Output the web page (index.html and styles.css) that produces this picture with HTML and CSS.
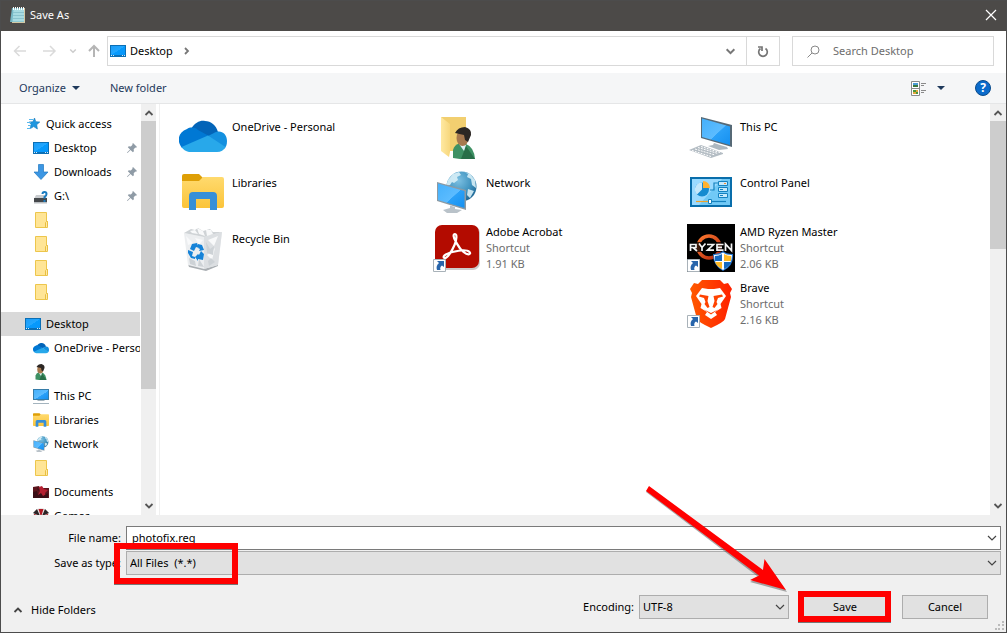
FILE: index.html
```html
<!DOCTYPE html>
<html lang="en">
<head>
<meta charset="utf-8">
<title>Save As</title>
<link rel="stylesheet" href="styles.css">
</head>
<body>
<svg class="defs" aria-hidden="true">
  <defs>
    <linearGradient id="gBlue" x1="0" y1="0" x2="1" y2="1"><stop offset="0" stop-color="#45b0fb"/><stop offset=".55" stop-color="#5cbcff"/><stop offset=".56" stop-color="#2ba1f8"/><stop offset="1" stop-color="#1590f0"/></linearGradient>
    <linearGradient id="gDesk" x1="0" y1="0" x2="1" y2="1"><stop offset="0" stop-color="#1c9cf6"/><stop offset=".5" stop-color="#22a7ff"/><stop offset=".51" stop-color="#069afc"/><stop offset="1" stop-color="#0896fa"/></linearGradient>
    <linearGradient id="gFold" x1="0" y1="0" x2="0" y2="1"><stop offset="0" stop-color="#ffda6e"/><stop offset="1" stop-color="#fbc43a"/></linearGradient>
    <linearGradient id="gPale" x1="0" y1="0" x2="1" y2="0"><stop offset="0" stop-color="#ffe9a2"/><stop offset="1" stop-color="#f7d77d"/></linearGradient>
    <radialGradient id="gGlobe" cx=".4" cy=".3" r=".75"><stop offset="0" stop-color="#7cc0e2"/><stop offset=".6" stop-color="#3f92be"/><stop offset="1" stop-color="#1d6390"/></radialGradient>
    <linearGradient id="gBrave" x1="0" y1="0" x2="1" y2="0"><stop offset="0" stop-color="#ff5a00"/><stop offset="1" stop-color="#ff2000"/></linearGradient>
    <linearGradient id="gRing" x1="0" y1="0" x2="1" y2="1"><stop offset="0" stop-color="#ff7a30"/><stop offset="1" stop-color="#b3260c"/></linearGradient>
  </defs>
  <symbol id="desktop" viewBox="0 0 16 16"><path fill="#0b6fb5" d="M0 2h16v12H0z"/><path fill="url(#gDesk)" d="M1 3h14v9H1z"/><path fill="#d6ebf9" d="M1 12h1v1H1zM3 12h1v1H3zM12 12h1v1h-1zM14 12h1v1h-1z"/></symbol>
  <symbol id="folder" viewBox="0 0 16 16"><path fill="#ffe596" stroke="#edc64c" d="M2.500.5h11v9h1v6h-12z"/><path fill="#ffe9a5" stroke="#e9bf41" d="M12.500 10.500l1-1h1v5l-1 1h-1z"/></symbol>
  <symbol id="pin" viewBox="0 0 12 12"><path fill="#8f9ba6" d="M7 1l4 4-1 .7-.6-.1-1.700 1.700.2 2-1 1-2.400-2.400L1.500 11 1 10.500l3.100-3L1.800 5.200l1-1 2 .2L6.500 2.700 6.300 2z"/></symbol>
  <symbol id="down" viewBox="0 0 10 10"><path fill="none" stroke="currentColor" stroke-width="1.200" d="M1 3l4 4 4-4"/></symbol>
  <symbol id="bold-down" viewBox="0 0 10 10"><path fill="none" stroke="currentColor" stroke-width="1.800" d="M1.500 3L5 6.500 8.500 3"/></symbol>
  <symbol id="bold-up" viewBox="0 0 10 10"><path fill="none" stroke="currentColor" stroke-width="1.800" d="M1.500 7L5 3.500 8.500 7"/></symbol>
  <symbol id="cloud" viewBox="0 0 48 32"><path fill="#0364b8" d="M12 9C16 2 22 0 26 1c6 0 11 4 13 11l-10 5z"/><path fill="#0078d4" d="M30 16L19 10C16 7 11 7 8 9-2 13-2 22 3 28l12 1z"/><path fill="#1490df" d="M29 16l6-3c6-4 13 0 13 8 0 4-1 6-3 8z"/><path fill="#28a8ea" d="M29 15.500l17.500 11.500Q44 32 38 32H10Q5 31 2.500 27z"/></symbol>
  <symbol id="libraries" viewBox="0 0 42 36"><path fill="#de9f06" d="M0 2q0-2 2-2h15l4 4-4 4H0z"/><path fill="url(#gFold)" d="M0 7h17l4-4h19q2 0 2 2v27q0 2-2 2H2q-2 0-2-2z"/><path fill="#378fd8" d="M7 36V22q0-4 4-4h20q4 0 4 4v14h-7V25H14v11z"/></symbol>
  <symbol id="network" viewBox="0 0 42 42"><circle cx="25.500" cy="15.500" r="15" fill="url(#gGlobe)"/><path fill="#d8eff7" opacity=".9" d="M12 9l5-6 6-2 2 3-4 2 1 3-4 3-2-1-2 3-4 1zM28 1l6 2 5 6 1 8-4-3-1-6-4-2 1-3zM32 18l6 2-4 7-3-3z"/><path fill="#8d9aa3" d="M1 11l29 8v20L1 30z"/><path fill="url(#gBlue)" d="M2 12.500l26.500 7.500v17L2 29z"/><path fill="#b9c2c9" d="M14 34.500l5 1.500v2l7 1-5 3H11l-4-3 7-2z"/></symbol>
  <symbol id="person" viewBox="0 0 24 32"><path fill="#3e9164" d="M1 31V23q1-5 7-7l6 1q8 3 9 15H8z"/><path fill="#286e48" d="M14 19l9 13H9z"/><path fill="#dfeff4" d="M7 17l5 7 2-6z"/><ellipse cx="10.500" cy="11" rx="6" ry="8" fill="#a7794f"/><path fill="#2c2724" d="M3 6Q6 0 13 0q7 2 6 8l-3 7-3-2-1-5z"/></symbol>
  <symbol id="pc-small" viewBox="0 0 16 16"><path fill="#367ca8" d="M0 1h16v11H0z"/><path fill="url(#gBlue)" d="M1 2h14v9H1z"/><path fill="#a4b4be" d="M5 12h6l1 1H4zM0 15h16v1H0z"/></symbol>
  <symbol id="shortcut" viewBox="0 0 13 13"><path fill="#fff" stroke="#a9b2b9" d="M.5.5h12v12H.5z"/><path fill="#2865ab" d="M4 2h7v6L9 6.500Q6.500 8 7.500 11H4Q2.500 7 6 4z"/></symbol>
</svg>

<div class="window">
  <header class="titlebar">
    <svg width="18" height="18" viewBox="0 0 18 18" aria-hidden="true"><path fill="#d3c9a4" d="M15 2h1v15H3v-1h12z"/><path fill="#75b8c5" d="M3 2h12v14H1z"/><path fill="#a8dce2" d="M4.500 3H15v12.500H3.500z"/><path stroke="#8ac4ce" d="M4 6.500h11M4 9.500h11M4 12.500h11"/><path stroke="#fff" stroke-dasharray="1 1" stroke-width="3" d="M4 2.500h11"/></svg>
    <h1>Save As</h1>
    <button class="close" aria-label="Close"><svg width="12" height="12" viewBox="0 0 12 12"><path stroke="#fff" stroke-width="1.200" d="M1 1l10 10M11 1L1 11"/></svg></button>
  </header>

  <nav class="navbar" aria-label="Location">
    <div class="history">
      <button class="plain" aria-label="Back" disabled><svg width="14" height="12" viewBox="0 0 14 12"><path fill="none" stroke="#dadada" stroke-width="1.500" d="M13 6H1.500M6.500 1l-5 5 5 5"/></svg></button>
      <button class="plain" aria-label="Forward" disabled><svg width="14" height="12" viewBox="0 0 14 12"><path fill="none" stroke="#dadada" stroke-width="1.500" d="M0 6h12M7 1l5 5-5 5"/></svg></button>
      <button class="plain recent" aria-label="Recent locations" disabled><svg width="8" height="8"><use href="#bold-down"/></svg></button>
      <button class="plain up" aria-label="Up"><svg width="12" height="14" viewBox="0 0 12 14"><path fill="none" stroke="#b5b5b5" stroke-width="2" d="M6 13V2M1 7l5-5 5 5"/></svg></button>
    </div>
    <div class="address">
      <svg width="16" height="16"><use href="#desktop"/></svg>
      <button class="crumb">Desktop</button>
      <svg class="crumb-arrow" width="6" height="8" viewBox="0 0 6 8"><path fill="none" stroke="#777" stroke-width="1.800" d="M1 1l3 3-3 3"/></svg>
      <button class="plain previous" aria-label="Previous locations"><svg width="11" height="11"><use href="#bold-down"/></svg></button>
      <button class="refresh" aria-label="Refresh"><svg width="12" height="13" viewBox="0 0 12 13"><path fill="none" stroke="#757575" stroke-width="1.700" d="M8.500 3.500A4.300 4.300 0 1 1 3.500 3.500M1 2h4v4"/></svg></button>
    </div>
    <label class="search">
      <svg width="13" height="13" viewBox="0 0 13 13" aria-hidden="true"><circle cx="8" cy="5" r="4" fill="none" stroke="#888"/><path stroke="#888" d="M5 8L.5 12.500"/></svg>
      <input type="search" placeholder="Search Desktop" aria-label="Search Desktop">
    </label>
  </nav>

  <div class="toolbar">
    <button class="tool">Organize <span class="caret"></span></button>
    <button class="tool">New folder</button>
    <button class="tool view" aria-label="Change your view">
      <svg width="16" height="15" viewBox="0 0 16 15"><path fill="#fff" stroke="#8a8a8a" d="M.5.5h8v14h-8zM.5 7.500h8"/><path fill="#4b9bd4" d="M2 2h5v2H2z"/><path fill="#39753f" d="M2 4h5v2H2z"/><path fill="#e2a53b" d="M2 9h5v4H2z"/><path fill="#4a983c" d="M2 9h3v2H2zM5 11h2v2H5z"/><path stroke="#8a8a8a" d="M10 2.500h5M10 4.500h3M10 9.500h5M10 11.500h3"/></svg>
      <span class="caret"></span>
    </button>
    <button class="help" aria-label="Help">?</button>
  </div>

  <div class="content">
    <aside class="sidebar">
      <ul class="tree">
        <li><a href="#" class="root"><svg viewBox="0 0 16 16"><path fill="#1f97e0" stroke="#1277b8" stroke-width=".6" d="M9.500 2l1.300 3.700 4 .3-3.100 2.700.7 4.300-3.700-2.400-3.700 2.200 1.200-4.200L4 6l3.900-.2z"/><path stroke="#58b7ec" d="M4 3.500h4M2 6.500h4M3 9.500h3M2 12.500h4"/></svg><span>Quick access</span></a></li>
        <li><a href="#"><svg><use href="#desktop"/></svg><span>Desktop</span><svg class="pin"><use href="#pin"/></svg></a></li>
        <li><a href="#"><svg viewBox="0 0 16 16"><path fill="#3c96e3" stroke="#2078c2" stroke-width=".7" d="M5.500.5h5v7.500h4.500L8 15.500 1 8h4.500z"/></svg><span>Downloads</span><svg class="pin"><use href="#pin"/></svg></a></li>
        <li><a href="#"><svg viewBox="0 0 16 16"><path fill="#c9cccf" d="M3 7h9l2 4H1z"/><path fill="#45484b" d="M1 10h13v4H1z"/><path fill="#b9bdc0" d="M1 14h13v1.500H1z"/><path fill="none" stroke="#1c7cc0" stroke-width="2" d="M9.500 6Q9.500 4 11.500 4T13.500 6 11.500 9v1.500"/><path fill="#1c7cc0" d="M10.500 12h2v2h-2z"/></svg><span>G:\</span><svg class="pin"><use href="#pin"/></svg></a></li>
        <li><a href="#" aria-label="Folder"><svg><use href="#folder"/></svg></a></li>
        <li><a href="#" aria-label="Folder"><svg><use href="#folder"/></svg></a></li>
        <li><a href="#" aria-label="Folder"><svg><use href="#folder"/></svg></a></li>
        <li><a href="#" aria-label="Folder"><svg><use href="#folder"/></svg></a></li>
      </ul>
      <ul class="tree">
        <li><a href="#" class="root selected" aria-current="true"><svg><use href="#desktop"/></svg><span>Desktop</span></a></li>
        <li><a href="#"><svg><use href="#cloud"/></svg><span>OneDrive - Personal</span></a></li>
        <li><a href="#" aria-label="User folder"><svg><use href="#person"/></svg></a></li>
        <li><a href="#"><svg><use href="#pc-small"/></svg><span>This PC</span></a></li>
        <li><a href="#"><svg><use href="#libraries"/></svg><span>Libraries</span></a></li>
        <li><a href="#"><svg><use href="#network"/></svg><span>Network</span></a></li>
        <li><a href="#" aria-label="Folder"><svg><use href="#folder"/></svg></a></li>
        <li><a href="#"><svg viewBox="0 0 16 16"><path fill="#5b151c" d="M0 3l6-1 1 2h9v10H0z"/><path fill="#b41f30" d="M6 3l3-1 2 3 4 1-3 3 1 4-5 1-3-3 2-4z"/><path fill="#3a0e15" d="M0 8l4-1 1 4 3-2 2 3 5-3v5H0zM4 3l2 3-1 1z"/></svg><span>Documents</span></a></li>
        <li><a href="#"><svg viewBox="0 0 16 16"><circle cx="8" cy="8" r="8" fill="#e8e4e4"/><path fill="#b01822" d="M8 9L5.500 1h5zM8 8L1 6v4zM8 8l7-2v4zM8 8l-3 7h6z"/><path fill="#2b2426" d="M7 8L0 5l4-4zM9 8l3-7 4 4zM7 9l-6 4 4 2zM9 9l6 4-4 2z"/></svg><span>Games</span></a></li>
      </ul>
    </aside>
    <div class="scrollbar side" aria-hidden="true">
      <svg><use href="#bold-up"/></svg><div class="track"><div class="thumb"></div></div><svg><use href="#bold-down"/></svg>
    </div>

    <main class="files">
      <a href="#" class="item"><span class="icon"><svg viewBox="0 0 48 48"><use href="#cloud" y="8" width="48" height="32"/></svg></span><span class="text"><span>OneDrive - Personal</span></span></a>
      <a href="#" class="item" aria-label="User folder"><span class="icon"><svg viewBox="0 0 48 48"><path fill="#f2cf70" d="M8 5h25v34H16z"/><path fill="url(#gPale)" d="M8 5l9 7v28l-1 5-8-6z"/><use href="#person" x="19" y="15" width="24" height="32"/></svg></span></a>
      <a href="#" class="item"><span class="icon"><svg viewBox="0 0 48 48"><path fill="#566976" d="M14 5l31 8v22l-31-9z"/><path fill="url(#gBlue)" d="M15 6.500l28 8v18.500l-28-8z"/><path fill="#adb8c0" d="M27 31l6 2 7 2 1 2-9 1-11-4 5-1z"/><path fill="#b4bdc4" d="M2 38l12-5 22 8v1l-12 4z"/><path fill="none" stroke="#fff" stroke-width="1" stroke-dasharray="2 1" d="M5 38.500l19 6M8 37l20 6M11 35.500l20 6M14 34.500l19 6"/></svg></span><span class="text"><span>This PC</span></span></a>

      <a href="#" class="item"><span class="icon"><svg viewBox="0 0 48 48"><use href="#libraries" x="3" y="6" width="42" height="36"/></svg></span><span class="text"><span>Libraries</span></span></a>
      <a href="#" class="item"><span class="icon"><svg viewBox="0 0 48 48"><use href="#network" x="3" y="3" width="42" height="42"/></svg></span><span class="text"><span>Network</span></span></a>
      <a href="#" class="item"><span class="icon"><svg viewBox="0 0 48 48"><path fill="#096eab" d="M3 9h42v30H3z"/><path fill="#71c9f6" d="M5 11h38v26H5z"/><path fill="#9adaff" d="M5 11h30L12 37H5z"/><circle cx="15" cy="21.500" r="7" fill="#168bd0"/><path fill="#c4e7fa" d="M15 21.500v-7a7 7 0 0 0-5 12z"/><path fill="#ffb12e" d="M16 20v-7a7 7 0 0 1 7 7z"/><path fill="none" stroke="#1582bf" stroke-width="1.200" d="M23 22h4v-7h4"/><path fill="#c4e9fc" stroke="#1582bf" d="M31.500 13.500h9v4h-9zM31.500 19.500h9v4h-9zM31.500 25.500h9v4h-9z"/><path stroke="#1582bf" d="M33 21.500h3M33 27.500h3"/><path stroke="#f18b35" d="M37 15.500h2"/><path stroke="#f0a327" stroke-width="1.200" d="M9 33.500h13"/><path stroke="#1582bf" stroke-width="1.200" d="M25 33.500h14"/><path fill="#fff" stroke="#1582bf" d="M21.500 31.500h3v4h-3z"/></svg></span><span class="text"><span>Control Panel</span></span></a>

      <a href="#" class="item"><span class="icon"><svg viewBox="0 0 48 48"><path fill="#a9aeb2" d="M9 40l18 4 12-4v2l-12 5-17-4z"/><path fill="#eceef0" d="M5 9l20 4 18-5-4 33-14 4-16-4z"/><path fill="#dcdfe2" d="M25 13l18-5-4 33-14 4z"/><path fill="#cfd3d6" d="M5 9l7-4 4 1 3-2 5 3 7-2 3 3 9 0-18 5z"/><path fill="#f8f9fa" d="M11 7l5-1 3 4-6-1zM18 4l6 3 2 5-6-2zM27 6l5 0 2 4-6 2zM7 12l7 7-5 2zM16 14l8 2-4 5zM29 16l10-4-4 10zM28 31l8-7-3 12z"/><path fill="#cdd2d6" d="M27 18l4 7 4-3-1 9-6-2zM10 34l6 3 1 5-6-2zM20 35l5 8-6-1zM29 37l3-3 4 4-6 4z"/><path fill="#1683d8" d="M13 20l5-1 2 5-3-1-2 4-4-2zM19 20l4 1 2 5-5 1 1-2-2-1zM9 26l5 2-1 4 3 1v2l-4-1-3-5zM22 27l3 3-1 6-5-1v2l-3-4 3-3 1 1z"/></svg></span><span class="text"><span>Recycle Bin</span></span></a>
      <a href="#" class="item"><span class="icon"><svg viewBox="0 0 48 48"><rect x="2" y="2" width="45" height="44" rx="7" fill="#9d9696" opacity=".5"/><rect x="2" y="1" width="44" height="43" rx="7" fill="#b30b00"/><path fill="none" stroke="#fff" stroke-width="2.200" d="M23 18c-3-5-3-8-1-8s2 5-.5 11S14 35 11.500 34s0-4 8-6 15-2 17 0-1 4-6 0-6-8-7.500-10z"/><use href="#shortcut" y="35" width="13" height="13"/></svg></span><span class="text"><span>Adobe Acrobat</span><small>Shortcut</small><small>1.91 KB</small></span></a>
      <a href="#" class="item"><span class="icon"><svg viewBox="0 0 48 48"><path d="M0 0h48v48H0z"/><circle cx="22" cy="23" r="11" fill="none" stroke="url(#gRing)" stroke-width="3.500"/><path d="M2 18h44v10H2z" opacity=".75"/><path fill="none" stroke="#f5f5f5" stroke-width="1.700" d="M3.500 27v-6.500h5.500v3H4M6 23.500l4 3.500M12 19.500l3 4 3.500-4M15 23v4M20 20.500h6.500l-6 5.700H27M36.500 20.500H30v5.700h6.500M30 23.300h5M38.500 27v-7l6 6.500v-7"/><path fill="#2374ce" d="M26 30q7 0 10-3 3 3 10 3 1 12-10 17Q26 42 26 30z"/><path fill="#fff" d="M27 31q6 0 9-2.500 3 2.500 9 2.500 0 10-9 15-9-5-9-15z"/><path fill="#176bc1" d="M28 32q4 0 7-2v7h-7zM37 38h7q-2 5-7 7z"/><path fill="#ffb925" d="M37 30q3 2 7 2v5h-7zM28 38h7v7q-5-2-7-7z"/><use href="#shortcut" y="35" width="13" height="13"/></svg></span><span class="text"><span>AMD Ryzen Master</span><small>Shortcut</small><small>2.06 KB</small></span></a>

      <a href="#" class="item last"><span class="icon"><svg viewBox="0 0 48 48"><path fill="url(#gBrave)" d="M15 0h18l4 4 4-1 4 6-2 4 1 4-6 22q-1 3-14 9-13-6-14-9L4 17l1-4-2-4 4-6 4 1z"/><path fill="#fff" d="M15 8l6 1h6l6-1 6 8-5.500 8 1 4-6.500 4 2 3-6 4-6-4 2-3-6.500-4 1-4L9 16z"/><path fill="#ff4200" d="M13 14.500l8.500 1.500-1 5 2 6-2 1-3-4 1-2-1.500-4-5-1.500zM35 14.500l-8.500 1.500 1 5-2 6 2 1 3-4-1-2 1.500-4 5-1.500zM17 29.500l7 3.500 7-3.500-7 5z"/><use href="#shortcut" y="35" width="13" height="13"/></svg></span><span class="text"><span>Brave</span><small>Shortcut</small><small>2.16 KB</small></span></a>
    </main>
    <div class="scrollbar main" aria-hidden="true">
      <svg><use href="#bold-up"/></svg><div class="track"><div class="thumb"></div></div><svg><use href="#bold-down"/></svg>
    </div>
  </div>

  <footer class="form">
    <div class="fields">
      <label for="name">File name:</label>
      <div class="combo"><input id="name" type="text" value="photofix.reg"><svg><use href="#down"/></svg></div>
      <label for="type">Save as type:</label>
      <div class="combo"><select id="type"><option>All Files&nbsp; (*.*)</option></select><svg><use href="#down"/></svg></div>
      <span class="mark type-mark"></span>
    </div>
    <div class="actions">
      <button class="plain hide"><svg width="10" height="10"><use href="#bold-up"/></svg>Hide Folders</button>
      <label for="encoding">Encoding:</label>
      <div class="combo encoding"><select id="encoding"><option>UTF-8</option></select><svg><use href="#down"/></svg></div>
      <div class="save">
        <button class="push">Save</button>
        <span class="mark save-mark"></span>
        <svg class="pointer" viewBox="0 0 142 108" aria-hidden="true"><path fill="#555" opacity=".5" d="M5 4l114 84 2-10 22 31-37-10 9-4.500L2 9z"/><path fill="#f00" d="M5 3l114 84 1.500-11L142 107l-36-10 9-4.500L2 8z"/></svg>
      </div>
      <button class="push">Cancel</button>
    </div>
    <svg class="grip" viewBox="0 0 9 9" aria-hidden="true"><path fill="#bbb" d="M7 0h2v2H7zM3 3h2v2H3zM7 3h2v2H7zM0 7h2v2H0zM3 7h2v2H3zM7 7h2v2H7z"/></svg>
  </footer>
</div>
</body>
</html>
```

FILE: styles.css
```css
* { box-sizing: border-box; }
body {
  margin: 0;
  font: 11px/16px "Noto Sans", "Open Sans", sans-serif;
  color: #000;
}
button, input, select { font: inherit; color: inherit; margin: 0; }
button { padding: 0; }
svg { display: block; flex: none; }
a { color: inherit; text-decoration: none; }
.defs { position: absolute; width: 0; height: 0; }

.window {
  display: flex;
  flex-direction: column;
  height: 100vh;
  min-height: 400px;
  border: 1px solid #4c4c4c;
  background: #fff;
}
.plain { display: flex; align-items: center; border: 0; background: none; }

.titlebar {
  display: flex;
  align-items: center;
  gap: 3px;
  height: 30px;
  flex: none;
  padding: 0 9px 2px 8px;
  background: #4c4a48;
  color: #fff;
}
.titlebar h1 { flex: 1; margin: 0; font-size: 11px; font-weight: 400; }
.close { display: flex; border: 0; background: none; }

.navbar {
  display: flex;
  align-items: center;
  height: 42px;
  flex: none;
  padding: 0 12px 2px 12px;
}
.history { display: flex; align-items: center; width: 94px; }
.history .plain + .plain { margin-left: 16px; }
.history .recent { color: #ccc; }
.history .plain.recent { margin-left: 12px; }
.history .plain.up { margin-left: 11px; }
.address {
  display: flex;
  align-items: center;
  flex: 1;
  height: 30px;
  padding-left: 2px;
  border: 1px solid #d9d9d9;
}
.crumb { margin-left: 4px; border: 0; background: none; }
.crumb-arrow { margin-left: 11px; }
.previous { margin-left: auto; margin-right: 10px; color: #777; }
.refresh {
  display: flex;
  align-items: center;
  justify-content: center;
  align-self: stretch;
  width: 33px;
  border: 0;
  border-left: 1px solid #d9d9d9;
  background: none;
}
.search {
  display: flex;
  align-items: center;
  gap: 13px;
  width: 202px;
  height: 30px;
  margin-left: 12px;
  padding-left: 14px;
  border: 1px solid #d9d9d9;
}
.search input { flex: 1; min-width: 0; padding: 0; border: 0; outline: 0; }
.search input::placeholder { color: #6d6d6d; opacity: 1; }

.toolbar {
  display: flex;
  align-items: center;
  height: 31px;
  flex: none;
  padding: 0 15px 0 18px;
  border-bottom: 1px solid #e5e6e7;
  background: #f5f6f7;
  color: #1e395b;
}
.tool { display: flex; align-items: center; gap: 6px; margin-right: 30px; border: 0; background: none; }
.caret { border: 4px solid transparent; border-top-color: #1e395b; border-bottom: 0; }
.view { gap: 10px; margin-left: auto; }
.help {
  width: 16px;
  height: 16px;
  border: 1px solid #0a4b8c;
  border-radius: 50%;
  background: #0b6bcb;
  color: #fff;
  font-size: 12px;
  font-weight: 700;
  line-height: 14px;
}

.content { display: flex; flex: 1; min-height: 0; }
.sidebar { width: 139px; flex: none; overflow: hidden; padding-top: 8px; }
.tree { margin: 0 0 8px; padding: 0; list-style: none; }
.tree a {
  display: flex;
  align-items: center;
  gap: 5px;
  height: 24px;
  padding-left: 32px;
  white-space: nowrap;
}
.tree a.root { padding-left: 24px; }
.tree svg { width: 16px; height: 16px; }
.tree .pin { width: 12px; height: 12px; margin-left: auto; margin-right: 2px; }
.tree .selected { background: #d9d9d9; }

.scrollbar {
  display: flex;
  flex-direction: column;
  align-items: center;
  width: 16px;
  flex: none;
  padding: 4px 0;
  background: #f0f0f0;
  color: #555;
}
.scrollbar svg { width: 10px; height: 10px; }
.side { width: 15px; margin-left: 1px; }
.track { flex: 1; align-self: stretch; padding: 3px 0; }
.thumb { height: 34%; background: #cdcdcd; }
.side .thumb { height: 71%; }

.files {
  display: grid;
  grid-template-columns: repeat(3, 254px);
  grid-auto-rows: 48px;
  gap: 8px 0;
  flex: 1;
  min-width: 0;
  overflow: hidden;
  margin-left: 3px;
  padding: 8px 0 0 19px;
  border-left: 1px solid #f0f0f0;
}
.item { display: flex; align-items: center; gap: 5px; }
.item.last { grid-column: 3; }
.icon svg { width: 48px; height: 48px; }
.text { display: flex; flex-direction: column; min-height: 34px; }
.text small { font-size: inherit; color: #6d6d6d; }

.form { position: relative; flex: none; padding: 11px 5px 13px; background: #f0f0f0; }
.fields {
  position: relative;
  display: grid;
  grid-template-columns: 115px 1fr;
  gap: 1px 5px;
  align-items: center;
}
.fields label { text-align: right; }
.combo { position: relative; height: 24px; }
.combo input, .combo select {
  width: 100%;
  height: 100%;
  padding: 0 20px 0 5px;
  border: 1px solid #7a7a7a;
  border-radius: 0;
  outline: 0;
  background: #fff;
  appearance: none;
}
.combo input { padding-bottom: 2px; }
.combo select { padding-left: 3px; border-color: #adadad; background: #e1e1e1; }
.combo svg { position: absolute; right: 4px; top: 7px; width: 10px; height: 10px; color: #444; pointer-events: none; }

.actions { display: flex; align-items: center; margin-top: 20px; padding: 0 13px 0 7px; }
.hide { gap: 8px; margin-right: auto; padding-top: 5px; color: #000; }
.hide svg { color: #444; }
.encoding { width: 150px; margin-left: 5px; }
.push { width: 86px; height: 24px; border: 1px solid #adadad; background: #e1e1e1; }
.save { position: relative; margin: 0 14px 0 13px; }

.mark { position: absolute; border: 6px solid #f00; box-shadow: 0 1px 0 #777; pointer-events: none; }
.type-mark { left: 108px; top: 17px; width: 124px; height: 41px; }
.save-mark { inset: -4px -3px -3px -4px; }
.pointer { position: absolute; right: 102px; bottom: 28px; width: 142px; height: 108px; overflow: visible; pointer-events: none; }
.grip { position: absolute; right: 2px; bottom: 2px; width: 9px; height: 9px; }
```
